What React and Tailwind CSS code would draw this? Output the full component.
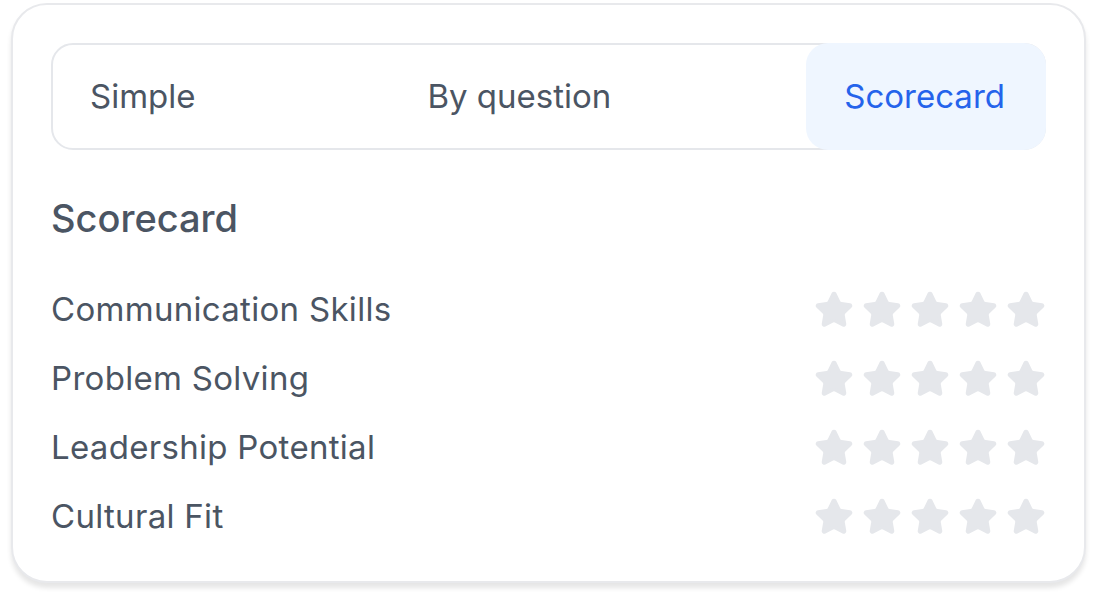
import React from "react";
import { Star } from "lucide-react";

const rows = ["Communication Skills", "Problem Solving", "Leadership Potential", "Cultural Fit"];

function Stars() {
  return (
    <div className="flex items-center gap-[8px]">
      {[0, 1, 2, 3, 4].map((i) => (
        <Star key={i} size={40} strokeWidth={2} fill="#e5e7eb" color="#e5e7eb" />
      ))}
    </div>
  );
}

export default function App() {
  return (
    <div
      className="w-[1096px] h-[602px] bg-white pt-[3px] pl-[11px] pr-[10px]"
      style={{ fontFamily: "Inter, 'Noto Sans', sans-serif" }}
    >
      <div className="h-[580px] rounded-[36px] border-2 border-[#e8e9ec] bg-white shadow-[0_5px_5px_rgba(0,0,0,0.10)] px-[38px] pt-[38px]">
        <div className="flex items-stretch justify-between h-[107px] rounded-[22px] border-2 border-[#e5e7eb]">
          <div className="flex items-center px-[37px] text-[33px] text-[#4b5563]">Simple</div>
          <div className="flex items-center px-[40px] text-[33px] text-[#4b5563]">By question</div>
          <div className="flex items-center pl-[38px] pr-[41px] -my-[2px] -mr-[2px] rounded-[22px] bg-[#eff6ff] text-[33px] text-[#2563eb]">
            Scorecard
          </div>
        </div>
        <div className="mt-[46px] text-[38px] leading-[44px] font-medium text-[#4b5563]">Scorecard</div>
        <div className="mt-[35px] flex flex-col">
          {rows.map((r) => (
            <div key={r} className="flex items-center justify-between h-[69px]">
              <span className="text-[33px] tracking-[0.3px] text-[#4b5563]">{r}</span>
              <Stars />
            </div>
          ))}
        </div>
      </div>
    </div>
  );
}
